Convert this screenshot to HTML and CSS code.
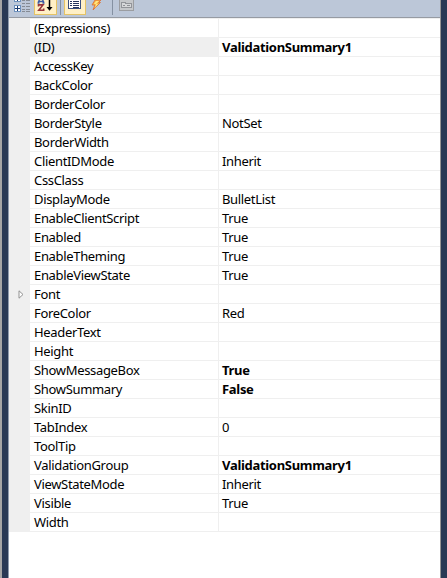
FILE: index.html
```html
<!DOCTYPE html>
<html lang="en">
<head>
<meta charset="utf-8">
<title>Properties</title>
<link rel="stylesheet" href="styles.css">
</head>
<body>
<div class="window">
  <main class="panel">
    <div class="toolbar">
      <svg class="tool categorized" width="18" height="15" viewBox="14 0 18 15" shape-rendering="crispEdges">
        <path d="M14 0h7v2h-7zM14 5h7v7h-7z" fill="#6d91bd"/>
        <path d="M15 0h5v1h-5zM15 6h5v5h-5z" fill="#fff"/>
        <path d="M17 0h1v1h-1zM15 8h5v1h-5zM17 6h1v5h-1z" fill="#17386f"/>
        <path d="M22 0h3v1h-3zM26 0h4v1h-4zM22 3h3v1h-3zM26 3h4v1h-4zM22 6h3v1h-3zM26 6h4v1h-4zM22 9h3v1h-3zM26 9h4v1h-4zM22 11h3v1h-3zM26 11h4v1h-4z" fill="#858b94"/>
      </svg>
      <div class="tool-button sort">
        <svg width="21" height="14" viewBox="35 0 21 14">
          <path d="M38.5 3V1.5L39.5 0M43.5 3V1.5L42.5 0M38.5 1.5h5M37.5 3h2M42.5 3h2" fill="none" stroke="#3c5ca5" stroke-width="1.4"/>
          <path d="M38.5 6.5V4.9H43L38.8 10.2H43.7V8.5" fill="none" stroke="#98343b" stroke-width="1.6"/>
          <path d="M49.5 0v8" stroke="#000" stroke-width="1.5"/><path d="M46.5 7h6l-3 3.7z"/>
        </svg>
      </div>
      <span class="divider"></span>
      <div class="tool-button list">
        <svg width="20" height="14" viewBox="64 0 20 14" shape-rendering="crispEdges">
          <path d="M67 0h13v9h-13z" fill="#3b4f80"/><path d="M68 0h11v8h-11z" fill="#fff"/>
          <path d="M69 1h2v1h-2zM69 3h2v1h-2zM69 5h2v1h-2zM72 1h6v1h-6zM72 3h6v1h-6zM72 5h6v1h-6zM72 7h6v1h-6z" fill="#25345d"/>
        </svg>
      </div>
      <svg class="tool bolt" width="14" height="15" viewBox="89 0 14 15">
        <path d="M94 0h6l-2.5 2.5h2L92 10l1.8-5H91z" fill="#f9b342" stroke="#d96c36" stroke-width=".8"/>
        <path d="M95 1h3l-3 3h2l-3 4 1-4h-2z" fill="#ffe681"/>
      </svg>
      <span class="divider"></span>
      <svg class="tool pages" width="16" height="12" viewBox="118 0 16 12" shape-rendering="crispEdges">
        <path d="M119 0h15v11h-15z" fill="#9b9da1"/><path d="M120 0h13v10h-13z" fill="#c5c7ca"/>
        <path d="M121 2h5v1h6v5h-11z" fill="#929499"/><path d="M122 3h3v1h6v3h-9z" fill="#d6d7d9"/><path d="M123 5h2v1h-2zM127 5h3v1h-3z" fill="#8e9095"/>
      </svg>
    </div>
    <div class="grid">
      <div class="row"><i></i><span>(Expressions)</span><span></span></div>
      <div class="row selected"><i></i><span>(ID)</span><b>ValidationSummary1</b></div>
      <div class="row"><i></i><span>AccessKey</span><span></span></div>
      <div class="row"><i></i><span>BackColor</span><span></span></div>
      <div class="row"><i></i><span>BorderColor</span><span></span></div>
      <div class="row"><i></i><span>BorderStyle</span><span>NotSet</span></div>
      <div class="row"><i></i><span>BorderWidth</span><span></span></div>
      <div class="row"><i></i><span>ClientIDMode</span><span>Inherit</span></div>
      <div class="row"><i></i><span>CssClass</span><span></span></div>
      <div class="row"><i></i><span>DisplayMode</span><span>BulletList</span></div>
      <div class="row"><i></i><span>EnableClientScript</span><span>True</span></div>
      <div class="row"><i></i><span>Enabled</span><span>True</span></div>
      <div class="row"><i></i><span>EnableTheming</span><span>True</span></div>
      <div class="row"><i></i><span>EnableViewState</span><span>True</span></div>
      <div class="row"><i><svg width="7" height="9" viewBox="0 0 7 9"><path d="M1 .8v7.4L5 4.5z" fill="#fff" stroke="#929292"/></svg></i><span>Font</span><span></span></div>
      <div class="row"><i></i><span>ForeColor</span><span>Red</span></div>
      <div class="row"><i></i><span>HeaderText</span><span></span></div>
      <div class="row"><i></i><span>Height</span><span></span></div>
      <div class="row"><i></i><span>ShowMessageBox</span><b>True</b></div>
      <div class="row"><i></i><span>ShowSummary</span><b>False</b></div>
      <div class="row"><i></i><span>SkinID</span><span></span></div>
      <div class="row"><i></i><span>TabIndex</span><span>0</span></div>
      <div class="row"><i></i><span>ToolTip</span><span></span></div>
      <div class="row"><i></i><span>ValidationGroup</span><b>ValidationSummary1</b></div>
      <div class="row"><i></i><span>ViewStateMode</span><span>Inherit</span></div>
      <div class="row"><i></i><span>Visible</span><span>True</span></div>
      <div class="row"><i></i><span>Width</span><span></span></div>
    </div>
  </main>
</div>
</body>
</html>
```
FILE: styles.css
```css
* { box-sizing: border-box; }
body { margin: 0; overflow: hidden; background: #293955; }
.window {
  width: 447px;
  height: 578px;
  padding: 0 6px 0 6px;
  border-left: 2px solid #a5a5a5;
  background: #293955;
}
.panel {
  height: 578px;
  border-left: 1px solid #8e9bad;
  border-right: 1px solid #949494;
  background: #fff;
}
.toolbar {
  display: flex;
  align-items: flex-start;
  height: 18px;
  padding-left: 5px;
  background: #bcc7d8;
  border-bottom: 1px solid #969ba3;
}
.tool { flex: none; }
.tool-button {
  flex: none;
  height: 15px;
  border: solid #e5c365;
  border-width: 0 1px 1px;
  background: #fff0c6;
}
.tool-button svg { display: block; }
.sort { width: 23px; margin-left: 2px; }
.divider { flex: none; width: 1px; height: 15px; margin: 0 3px; background: #8591a2; }
.list { width: 22px; }
.bolt { margin: 0 5px 0 4px; }
.pages { margin-left: 2px; }
.grid {
  border-top: 1px solid #efefef;
  color: #000;
  font: 13px/18px "Noto Sans", "Open Sans", sans-serif;
  letter-spacing: -0.33px;
}
.row { display: grid; grid-template-columns: 21px 188px 1fr; height: 19px; }
.row > * { border-bottom: 1px solid #efefef; white-space: nowrap; }
.row > i { background: #efefef; padding: 5px 0 0 9px; }
.row > i svg { display: block; }
.row > :nth-child(2) { padding-left: 4px; }
.row > :nth-child(3) { padding-left: 3px; border-left: 1px solid #efefef; }
.row > b { letter-spacing: -0.3px; }
.selected > span { background: #efefef; }
```
